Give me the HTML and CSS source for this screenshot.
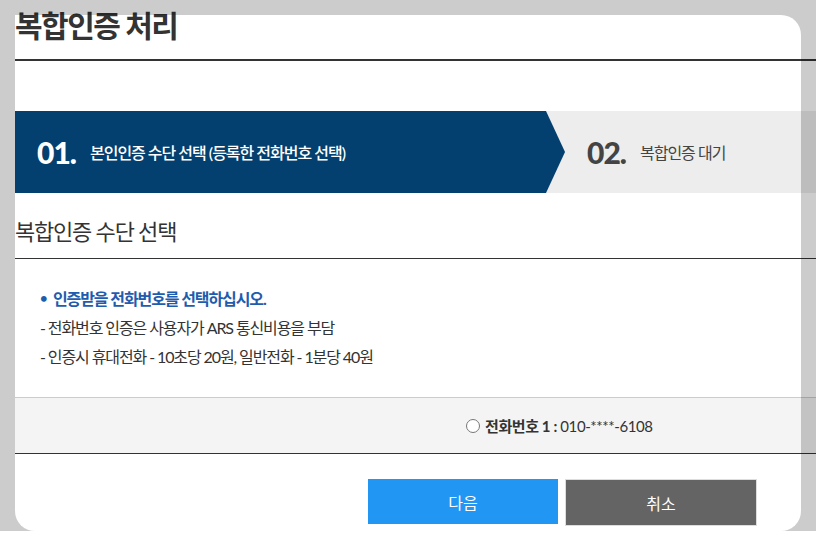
FILE: index.html
```html
<!DOCTYPE html>
<html lang="ko">
<head>
    <meta charset="UTF-8">
    <title>복합인증 처리</title>
    <meta name="viewport" content="width=device-width, initial-scale=1">
    <link rel="stylesheet" href="styles.css">
</head>
<body>
    <div class="popup">
        <div class="popup-inner">
            <h1 class="popup-title">복합인증 처리</h1>

            <div class="steps">
                <div class="step step-on">
                    <span class="step-num">01.</span>
                    <span class="step-text">본인인증 수단 선택 (등록한 전화번호 선택)</span>
                </div>
                <div class="step">
                    <span class="step-num">02.</span>
                    <span class="step-text">복합인증 대기</span>
                </div>
            </div>

            <h2 class="sub-title">복합인증 수단 선택</h2>

            <ul class="notice">
                <li class="notice-main">인증받을 전화번호를 선택하십시오.</li>
                <li>- 전화번호 인증은 사용자가 ARS 통신비용을 부담</li>
                <li>- 인증시 휴대전화 - 10초당 20원, 일반전화 - 1분당 40원</li>
            </ul>

            <div class="phone-list">
                <label class="phone-item">
                    <input type="radio" name="phone" value="1">
                    <span><b>전화번호 1 :</b> 010-****-6108</span>
                </label>
            </div>

            <div class="btn-area">
                <button type="button" class="btn btn-next">다음</button>
                <button type="button" class="btn btn-cancel">취소</button>
            </div>
        </div>
        <div class="popup-dim"></div>
    </div>
</body>
</html>
```

FILE: styles.css
```css
body { margin: 0; background: #fff; font-family: Lato, "Noto Sans CJK KR", sans-serif; color: #333; overflow: hidden; }
.popup { position: relative; width: 786px; height: 516px; margin: 15px 0 0 15px; background: #fff; border-radius: 0 20px 20px 20px; }
.popup-inner { margin-right: -15px; }
.popup-dim { position: absolute; top: 0; left: 0; right: 0; bottom: 0; border-radius: 0 20px 20px 20px; box-shadow: 0 0 0 2000px rgba(0, 0, 0, 0.2); pointer-events: none; }

.popup-title { margin: 0; height: 44px; line-height: 20px; font-size: 30px; font-weight: bold; letter-spacing: -1.5px; color: #333; border-bottom: 2px solid #333; }

.steps { display: flex; height: 82px; margin-top: 50px; background: #ededed; }
.step { display: flex; align-items: center; padding-left: 22px; color: #444; }
.step-on { width: 528px; color: #fff; background: #03406f; clip-path: polygon(0 0, 531px 0, 100% 50%, 531px 100%, 0 100%); }
.step-num { font-size: 30px; font-weight: 900; letter-spacing: -1px; margin-right: 14px; }
.step-text { font-size: 16px; letter-spacing: -1px; }
.step-on .step-text { font-weight: 500; }

.sub-title { margin: 0; padding: 28px 0 15px; line-height: 22px; font-size: 22px; font-weight: normal; letter-spacing: -1.2px; border-bottom: 1px solid #333; }

.notice { list-style: none; margin: 0; padding: 25px 0 26px 25px; font-size: 16px; line-height: 29px; letter-spacing: -1.1px; }
.notice li { height: 29px; }
.notice-main { color: #1f5cae; font-weight: bold; }
.notice-main::before { content: "•"; display: inline-block; vertical-align: top; width: 13px; font-size: 13px; letter-spacing: 0; }

.phone-list { height: 55px; display: flex; align-items: center; padding-left: 451px; background: #f4f4f4; border-top: 1px solid #ccc; border-bottom: 1px solid #333; }
.phone-item { display: flex; align-items: center; font-size: 15px; letter-spacing: -0.4px; }
.phone-item input { width: 14px; height: 14px; margin: 0 5px 0 0; }

.btn-area { display: flex; align-items: flex-start; gap: 7px; padding: 25px 0 0 353px; }
.btn { height: 45px; width: 190px; font-family: inherit; font-size: 16px; color: #fff; border: none; cursor: pointer; }
.btn-next { background: #2196f3; }
.btn-cancel { height: 47px; width: 192px; background: #646464; border: 1px solid #ddd; }
```
